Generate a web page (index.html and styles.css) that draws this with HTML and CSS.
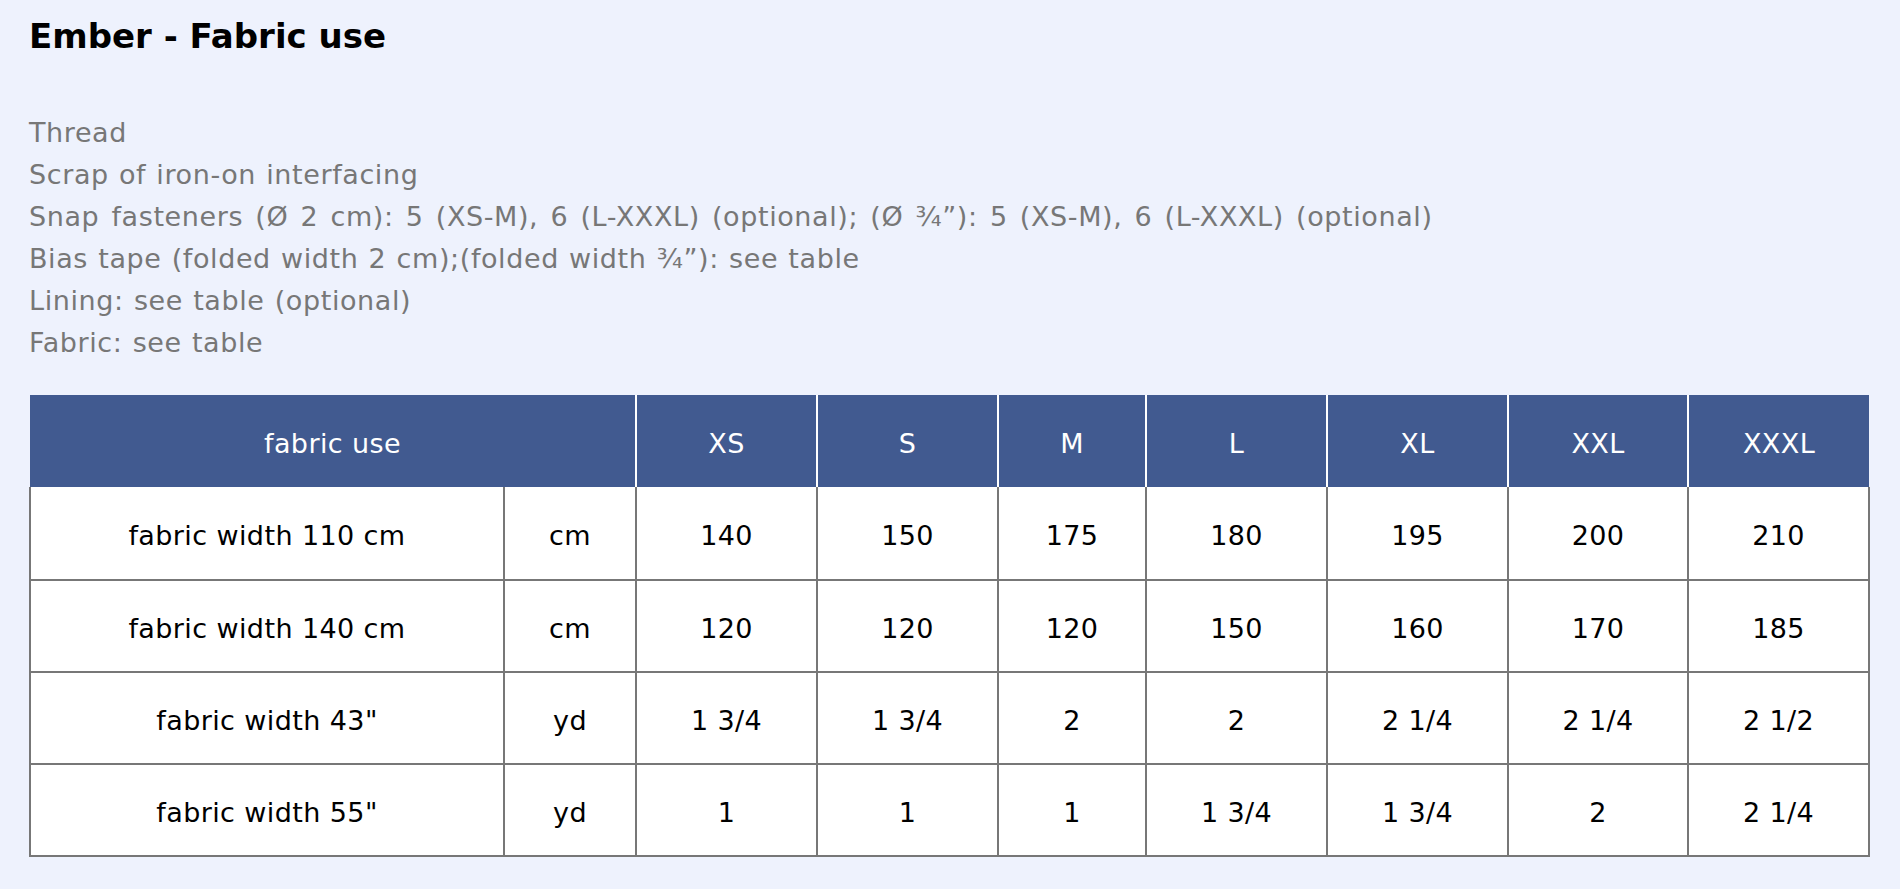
FILE: index.html
```html
<!DOCTYPE html>
<html lang="en">
<head>
<meta charset="utf-8">
<title>Ember - Fabric use</title>
<link rel="stylesheet" href="styles.css">
</head>
<body>
<main class="page">
  <h1 class="title">Ember - Fabric use</h1>
  <ul class="supplies">
    <li>Thread</li>
    <li>Scrap of iron-on interfacing</li>
    <li class="supplies-long">Snap fasteners (Ø 2 cm): 5 (XS-M), 6 (L-XXXL) (optional); (Ø ¾”): 5 (XS-M), 6 (L-XXXL) (optional)</li>
    <li>Bias tape (folded width 2 cm);(folded width ¾”): see table</li>
    <li>Lining: see table (optional)</li>
    <li>Fabric: see table</li>
  </ul>
  <table class="sizes">
    <colgroup>
      <col class="c-label">
      <col class="c-unit">
      <col class="c-wide">
      <col class="c-wide">
      <col class="c-narrow">
      <col class="c-wide">
      <col class="c-wide">
      <col class="c-wide2">
      <col class="c-wide">
    </colgroup>
    <thead>
      <tr>
        <th colspan="2">fabric use</th>
        <th>XS</th>
        <th>S</th>
        <th>M</th>
        <th>L</th>
        <th>XL</th>
        <th>XXL</th>
        <th>XXXL</th>
      </tr>
    </thead>
    <tbody>
      <tr>
        <td>fabric width 110 cm</td><td>cm</td>
        <td>140</td><td>150</td><td>175</td><td>180</td><td>195</td><td>200</td><td>210</td>
      </tr>
      <tr>
        <td>fabric width 140 cm</td><td>cm</td>
        <td>120</td><td>120</td><td>120</td><td>150</td><td>160</td><td>170</td><td>185</td>
      </tr>
      <tr>
        <td>fabric width 43"</td><td>yd</td>
        <td>1 3/4</td><td>1 3/4</td><td>2</td><td>2</td><td>2 1/4</td><td>2 1/4</td><td>2 1/2</td>
      </tr>
      <tr>
        <td>fabric width 55"</td><td>yd</td>
        <td>1</td><td>1</td><td>1</td><td>1 3/4</td><td>1 3/4</td><td>2</td><td>2 1/4</td>
      </tr>
    </tbody>
  </table>
</main>
</body>
</html>
```

FILE: styles.css
```css
html, body {
  margin: 0;
  padding: 0;
  background: #eef2fd;
}

body {
  font-family: "DejaVu Sans", Verdana, sans-serif;
  font-size: 27px;
  color: #000;
}

.page {
  padding: 19px 0 0 29px;
}

.title {
  margin: 0;
  font-size: 34px;
  line-height: 34px;
  font-weight: bold;
  color: #000;
}

.supplies {
  list-style: none;
  margin: 59px 0 0 0;
  padding: 0;
  line-height: 42px;
  color: #777777;
  letter-spacing: 0.6px;
  word-spacing: 1px;
}

.supplies-long {
  word-spacing: 3px;
}

.sizes {
  margin-top: 31px;
  width: 1839px;
  table-layout: fixed;
  border-collapse: collapse;
  font-size: 27px;
  letter-spacing: 0.4px;
}

.c-label { width: 474px; }
.c-unit { width: 132px; }
.c-wide { width: 181px; }
.c-wide2 { width: 180px; }
.c-narrow { width: 148px; }

.sizes th {
  background: #415a90;
  color: #fff;
  font-weight: normal;
  height: 87px;
  padding: 5px 0 0 0;
  text-align: center;
  border: none;
  border-left: 2px solid #fff;
}

.sizes th:first-child {
  border-left: none;
}

.sizes td {
  background: #fff;
  height: 85px;
  padding: 5px 0 0 0;
  text-align: center;
  border: 2px solid #777;
}

.sizes tbody tr:first-child td {
  border-top: none;
  height: 87px;
}
```
